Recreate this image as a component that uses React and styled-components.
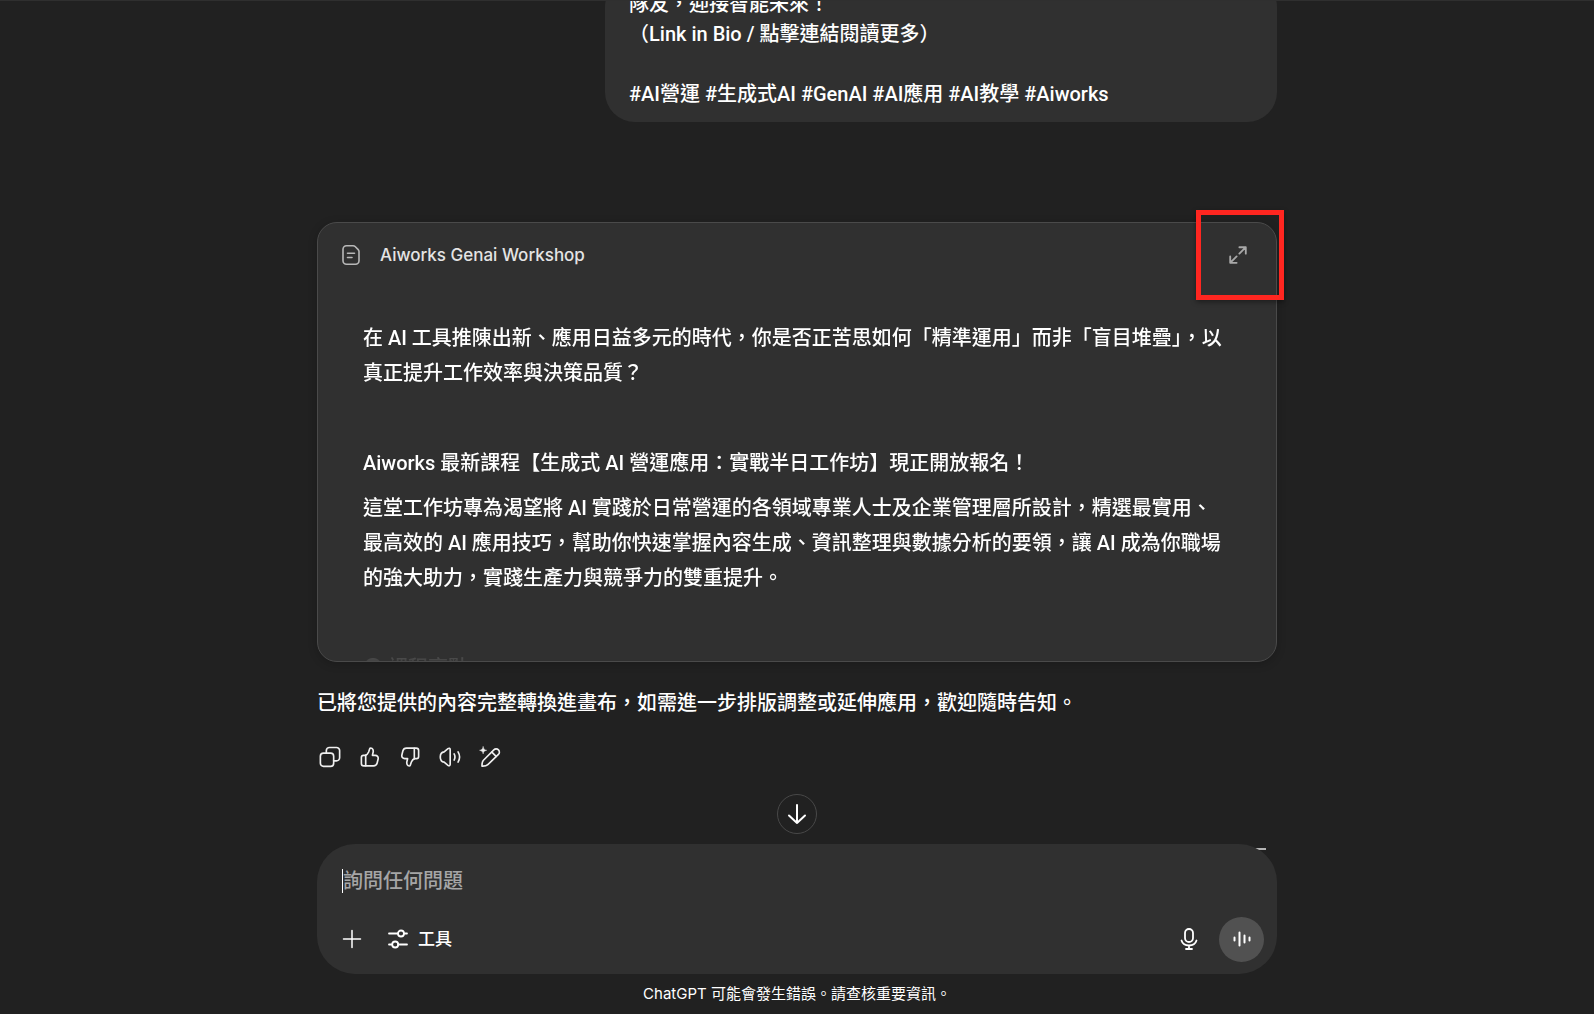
import styled, { createGlobalStyle } from "styled-components";

const GlobalStyle = createGlobalStyle`
  * {
    box-sizing: border-box;
  }

  body {
    margin: 0;
    background: #212121;
    color: #fff;
    font-family: Roboto, "Noto Sans CJK TC", sans-serif;
    font-size: 20px;
    font-weight: 500;
    -webkit-font-smoothing: antialiased;
  }

  button,
  textarea {
    font: inherit;
    color: inherit;
  }

  button {
    display: inline-flex;
    align-items: center;
    justify-content: center;
    padding: 0;
    border: 0;
    background: none;
    cursor: pointer;
  }

  p {
    margin: 0;
  }
`;

const tags = ["#AI營運", "#生成式AI", "#GenAI", "#AI應用", "#AI教學", "#Aiworks"];

const paragraphs = [
  "在 AI 工具推陳出新、應用日益多元的時代，你是否正苦思如何「精準運用」而非「盲目堆疊」，以真正提升工作效率與決策品質？",
  "",
  "Aiworks 最新課程【生成式 AI 營運應用：實戰半日工作坊】現正開放報名！",
  "這堂工作坊專為渴望將 AI 實踐於日常營運的各領域專業人士及企業管理層所設計，精選最實用、最高效的 AI 應用技巧，幫助你快速掌握內容生成、資訊整理與數據分析的要領，讓 AI 成為你職場的強大助力，實踐生產力與競爭力的雙重提升。",
  "",
  "● 課程亮點",
];

const Icon = ({ size = 24, stroke = 1.5, children }) => (
  <svg
    width={size}
    height={size}
    viewBox="0 0 24 24"
    fill="none"
    stroke="currentColor"
    strokeWidth={stroke}
    strokeLinecap="round"
    strokeLinejoin="round"
    aria-hidden="true"
  >
    {children}
  </svg>
);

const thumb = (
  <>
    <path d="M6.800 10.200H4.900A2.300 2.300 0 0 0 2.600 12.500v6.500a2.700 2.700 0 0 0 2.700 2.700h10.500c2 0 3.500-1.200 4-3.100l1-4.100c.6-2.400-.8-4.300-3.200-4.300h-3l.8-3.400c.5-2.300-.5-4.400-2.600-4.600-.6 0-.9.200-1.100.8L10.500 6.500c-.9 2.200-1.900 3.200-3.700 3.700" />
    <path d="M7.300 10.200v11.300" />
  </>
);

const actions = [
  {
    label: "複製",
    icon: (
      <>
        <rect x="1.500" y="7.800" width="14.500" height="14.500" rx="3.400" />
        <path d="M8 7.800V5A3.400 3.400 0 0 1 11.400 1.600H19A3.400 3.400 0 0 1 22.500 5v7.800A3.400 3.400 0 0 1 19 16.200h-3" />
      </>
    ),
  },
  { label: "回應良好", icon: thumb },
  { label: "回應不佳", icon: <g transform="rotate(180 12 12)">{thumb}</g> },
  {
    label: "朗讀",
    icon: (
      <>
        <path d="M12.200 4v16c0 1.600-1.200 2-2.400 1.100L5.600 17.600c-2.600-.3-4.200-2.600-4.200-5.600s1.600-5.300 4.200-5.600l4.200-3.500c1.200-.9 2.400-.5 2.400 1.100z" />
        <path d="M16.500 8.700c1.100 2 1.100 4.600 0 6.600M20.800 6.400c2 3.400 2 7.800 0 11.200" />
      </>
    ),
  },
  {
    label: "在畫布中編輯",
    icon: (
      <>
        <path d="M4.600 15.800 16.200 4.200a3.500 3.500 0 0 1 5 0 3.500 3.500 0 0 1 0 5L9.600 20.400c-1.500 1.400-3.900 1.700-6.300 1.600-.1-2.400 0-4.600 1.300-6.200z" />
        <path d="m14 6.700 4.700 4.700" />
        <path
          d="M4.500.8c.5 2.500 1.400 3.400 3.900 3.900-2.500.5-3.400 1.400-3.900 3.900C4 6.100 3.100 5.200.6 4.700 3.100 4.200 4 3.300 4.500.8z"
          fill="currentColor"
          strokeWidth="0.500"
        />
      </>
    ),
  },
];

function App() {
  return (
    <Page>
      <GlobalStyle />
      <Conversation>
        <Thread>
          <UserMessage>
            隊友，迎接智能未來！{"\n"}
            （Link in Bio / 點擊連結閱讀更多）{"\n\n"}
            {tags.join(" ")}
          </UserMessage>

          <Canvas>
            <CanvasHeader>
              <DocIcon>
                <Icon stroke={1.6}>
                  <path d="M7.500 2.700h6.600c.8 0 1.500.3 2 .8l3.100 3.100c.5.500.8 1.200.8 2v9.200a3.500 3.500 0 0 1-3.500 3.500h-9A3.500 3.500 0 0 1 4 17.800V6.200a3.500 3.500 0 0 1 3.500-3.500z" />
                  <path d="M8.500 10.200h7M8.500 14.500h4.500" />
                </Icon>
              </DocIcon>
              <CanvasTitle>Aiworks Genai Workshop</CanvasTitle>
              <ExpandButton type="button" aria-label="展開">
                <Icon size={22} stroke={2}>
                  <path d="M13.500 3.500h7v7M20 4l-6.500 6.500M10.500 20.500h-7v-7M4 20l6.500-6.500" />
                </Icon>
              </ExpandButton>
            </CanvasHeader>
            <CanvasBody>
              {paragraphs.map((text, index) => (
                <Paragraph key={index}>{text}</Paragraph>
              ))}
            </CanvasBody>
            <Highlight />
          </Canvas>

          <Reply>已將您提供的內容完整轉換進畫布，如需進一步排版調整或延伸應用，歡迎隨時告知。</Reply>
          <Actions>
            {actions.map(({ label, icon }) => (
              <ActionButton key={label} type="button" aria-label={label}>
                <Icon size={22} stroke={1.8}>
                  {icon}
                </Icon>
              </ActionButton>
            ))}
          </Actions>
        </Thread>
      </Conversation>

      <ComposerArea>
        <ScrollButton type="button" aria-label="捲動至底部">
          <Icon size={24} stroke={2}>
            <path d="M12 3v18M4 13.500l8 7.500 8-7.500" />
          </Icon>
        </ScrollButton>
        <HiddenEdge />
        <Composer>
          <PromptRow>
            <Caret />
            <Prompt rows={1} aria-label="詢問任何問題" placeholder="詢問任何問題" />
          </PromptRow>
          <Toolbar>
            <ToolGroup $gap={22}>
              <ToolButton type="button" aria-label="新增">
                <Icon size={24}>
                  <path d="M12 3.500v17M3.500 12h17" />
                </Icon>
              </ToolButton>
              <ToolButton type="button">
                <Icon size={24} stroke={1.8}>
                  <path d="M3 6.500h9M18.200 6.500H21M3 17.500h3M12.200 17.500H21" />
                  <circle cx="15" cy="6.500" r="3" />
                  <circle cx="9.200" cy="17.500" r="3" />
                </Icon>
                工具
              </ToolButton>
            </ToolGroup>
            <ToolGroup $gap={18}>
              <ToolButton type="button" aria-label="聽寫">
                <Icon size={24} stroke={1.8}>
                  <rect x="8" y="2" width="8" height="13" rx="4" />
                  <path d="M4.500 13.500c1 3.200 4 5 7.500 5s6.500-1.800 7.500-5M12 18.500V22M9 22h6" />
                </Icon>
              </ToolButton>
              <VoiceButton type="button" aria-label="語音模式">
                <Icon size={24} stroke={2}>
                  <path d="M4.500 10.500v3M9.500 5.500v13M14.500 8.500v7M19.500 10.500v3" />
                </Icon>
              </VoiceButton>
            </ToolGroup>
          </Toolbar>
        </Composer>
      </ComposerArea>
      <Notice>ChatGPT 可能會發生錯誤。請查核重要資訊。</Notice>
    </Page>
  );
}

const Page = styled.div`
  display: flex;
  flex-direction: column;
  height: 100vh;
  overflow: hidden;
`;

const Conversation = styled.main`
  flex: 1;
  min-height: 0;
  display: flex;
  flex-direction: column;
  justify-content: flex-end;
  align-items: center;
  overflow: hidden;
  border-top: 1px solid #2f2f2f;
`;

const Thread = styled.div`
  display: flex;
  flex-direction: column;
  flex-shrink: 0;
  width: 100%;
  max-width: 960px;
  padding-bottom: 75px;
`;

const UserMessage = styled.div`
  align-self: flex-end;
  width: 70%;
  padding: 12px 24px 13px;
  border-radius: 30px;
  background: #303030;
  line-height: 30px;
  white-space: pre-wrap;
`;

const Canvas = styled.section`
  position: relative;
  margin-top: 100px;
  border: 1px solid #4a4a4a;
  border-radius: 20px;
  background: #303030;
  box-shadow: 0 2px 10px rgba(0, 0, 0, 0.2);
`;

const CanvasHeader = styled.header`
  display: flex;
  align-items: center;
  height: 64px;
  padding: 0 24px 0 21px;
`;

const DocIcon = styled.span`
  display: flex;
  color: #b8b8b8;
`;

const CanvasTitle = styled.h2`
  flex: 1;
  margin: 0 0 0 17px;
  color: #e4e4e4;
  font-family: Inter, "Noto Sans CJK TC", sans-serif;
  font-size: 17px;
  font-weight: 500;
`;

const ExpandButton = styled.button`
  width: 28px;
  height: 28px;
  color: #a8a8a8;
`;

const CanvasBody = styled.div`
  display: flex;
  flex-direction: column;
  gap: 10px;
  height: 374px;
  padding: 34px 50px 0 45px;
  overflow: hidden;
  mask-image: linear-gradient(#000 80%, transparent 102%);
`;

const Paragraph = styled.p`
  flex-shrink: 0;
  min-height: 35px;
  line-height: 35px;
`;

const Highlight = styled.div`
  position: absolute;
  top: -13px;
  right: -8px;
  width: 88px;
  height: 90px;
  border: 5px solid #ff2620;
  box-shadow: 0 2px 5px rgba(0, 0, 0, 0.4);
  pointer-events: none;
`;

const Reply = styled.p`
  margin-top: 24px;
  line-height: 35px;
`;

const Actions = styled.div`
  display: flex;
  gap: 16px;
  margin-top: 24px;
  padding-left: 1px;
`;

const ActionButton = styled.button`
  width: 24px;
  height: 24px;
  color: #f0f0f0;
`;

const ComposerArea = styled.div`
  position: relative;
  width: 100%;
  max-width: 960px;
  margin: 0 auto;
`;

const ScrollButton = styled.button`
  position: absolute;
  top: -50px;
  left: 50%;
  width: 40px;
  height: 40px;
  margin-left: -20px;
  border: 1px solid #484848;
  border-radius: 50%;
  background: #212121;
`;

const HiddenEdge = styled.span`
  position: absolute;
  top: 4px;
  right: 11px;
  width: 12px;
  height: 2px;
  background: #b4b4b4;
`;

const Composer = styled.form`
  position: relative;
  padding: 21px 13px 12px 12px;
  border-radius: 38px;
  background: #303030;
`;

const PromptRow = styled.div`
  display: flex;
  align-items: center;
  padding: 0 13px;
`;

const Caret = styled.span`
  width: 1px;
  height: 24px;
  background: #fff;
`;

const Prompt = styled.textarea`
  display: block;
  flex: 1;
  height: 32px;
  padding: 0;
  border: 0;
  outline: 0;
  background: none;
  line-height: 32px;
  resize: none;
  overflow: hidden;

  &::placeholder {
    color: #a6a6a6;
    opacity: 1;
  }
`;

const Toolbar = styled.div`
  display: flex;
  align-items: center;
  justify-content: space-between;
  height: 46px;
  margin-top: 19px;
  padding-left: 11px;
`;

const ToolGroup = styled.div`
  display: flex;
  align-items: center;
  gap: ${({ $gap }) => $gap}px;
`;

const ToolButton = styled.button`
  gap: 8px;
  font-size: 17px;
  line-height: 24px;
`;

const VoiceButton = styled.button`
  width: 45px;
  height: 45px;
  border-radius: 50%;
  background: #515151;
`;

const Notice = styled.footer`
  height: 40px;
  line-height: 40px;
  font-family: Inter, "Noto Sans CJK TC", sans-serif;
  font-size: 15px;
  font-weight: 400;
  text-align: center;
`;

export default App;
